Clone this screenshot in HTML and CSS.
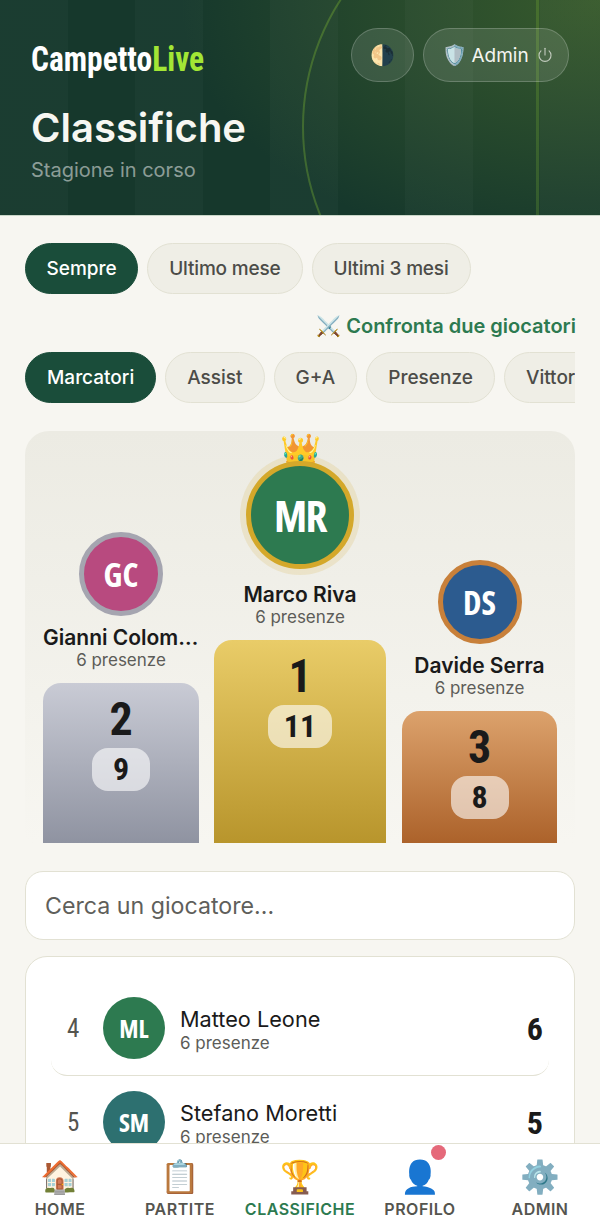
FILE: index.html
```html
<!DOCTYPE html>
<html lang="it">
<head>
    <meta charset="UTF-8">
    <meta name="viewport" content="width=device-width, initial-scale=1.0">
    <title>CampettoLive - Classifiche</title>
    <link rel="stylesheet" href="styles.css">
</head>
<body>
<div class="app">
    <!-- Header -->
    <header class="hero">
        <div class="pitch-circle"></div>
        <div class="pitch-line"></div>
        <div class="hero-top">
            <div class="logo">Campetto<span>Live</span></div>
            <div class="hero-actions">
                <button class="glass-btn theme-btn">🌗</button>
                <button class="glass-btn admin-btn">
                    <span class="admin-emoji">🛡️</span> Admin
                    <svg class="power" width="18" height="18" viewBox="0 0 24 24" fill="none" stroke="currentColor" stroke-width="1.5" stroke-linecap="round"><path d="M12 3v9"/><path d="M6.6 6.6a8 8 0 1 0 10.8 0"/></svg>
                </button>
            </div>
        </div>
        <h1>Classifiche</h1>
        <p class="hero-sub">Stagione in corso</p>
    </header>

    <main class="content">
        <div class="pills filters">
            <button class="pill active">Sempre</button>
            <button class="pill">Ultimo mese</button>
            <button class="pill">Ultimi 3 mesi</button>
        </div>
        <a class="compare" href="#">⚔️ Confronta due giocatori</a>
        <div class="pills tabs">
            <button class="pill active">Marcatori</button>
            <button class="pill">Assist</button>
            <button class="pill">G+A</button>
            <button class="pill">Presenze</button>
            <button class="pill">Vittorie</button>
        </div>

        <!-- Podio -->
        <section class="podium">
            <div class="podium-col second">
                <div class="avatar big silver">GC</div>
                <div class="podium-name">Gianni Colombo</div>
                <div class="podium-sub">6 presenze</div>
                <div class="bar">
                    <div class="bar-pos">2</div>
                    <div class="bar-val">9</div>
                </div>
            </div>
            <div class="podium-col first">
                <div class="crown">👑</div>
                <div class="avatar huge gold">MR</div>
                <div class="podium-name">Marco Riva</div>
                <div class="podium-sub">6 presenze</div>
                <div class="bar">
                    <div class="bar-pos">1</div>
                    <div class="bar-val">11</div>
                </div>
            </div>
            <div class="podium-col third">
                <div class="avatar big bronze">DS</div>
                <div class="podium-name">Davide Serra</div>
                <div class="podium-sub">6 presenze</div>
                <div class="bar">
                    <div class="bar-pos">3</div>
                    <div class="bar-val">8</div>
                </div>
            </div>
        </section>

        <input class="search" type="text" placeholder="Cerca un giocatore...">

        <section class="rank-list">
            <div class="rank-row">
                <div class="rank-pos">4</div>
                <div class="avatar small green">ML</div>
                <div class="rank-info">
                    <div class="rank-name">Matteo Leone</div>
                    <div class="rank-sub">6 presenze</div>
                </div>
                <div class="rank-val">6</div>
            </div>
            <div class="rank-row">
                <div class="rank-pos">5</div>
                <div class="avatar small teal">SM</div>
                <div class="rank-info">
                    <div class="rank-name">Stefano Moretti</div>
                    <div class="rank-sub">6 presenze</div>
                </div>
                <div class="rank-val">5</div>
            </div>
        </section>
    </main>

    <!-- Navigazione -->
    <nav class="bottom-nav">
        <a class="nav-item" href="#"><span class="nav-icon">🏠</span>HOME</a>
        <a class="nav-item" href="#"><span class="nav-icon">📋</span>PARTITE</a>
        <a class="nav-item active" href="#"><span class="nav-icon">🏆</span>CLASSIFICHE</a>
        <a class="nav-item" href="#"><span class="nav-icon">👤<i class="nav-badge"></i></span>PROFILO</a>
        <a class="nav-item" href="#"><span class="nav-icon">⚙️</span>ADMIN</a>
    </nav>
</div>
</body>
</html>
```
FILE: styles.css
```css
* {
    box-sizing: border-box;
}
body {
    margin: 0;
    font-family: Inter, "Noto Sans", sans-serif;
    background-color: #f7f6f1;
    color: #1a1a1a;
}
button {
    font-family: inherit;
}
.app {
    width: 600px;
    height: 1231px;
    display: flex;
    flex-direction: column;
    overflow: hidden;
}

/* header */
.hero {
    position: relative;
    flex: none;
    height: 216px;
    padding: 28px 31px 0;
    overflow: hidden;
    color: #fff;
    border-bottom: 1px solid #c9d6c8;
    background:
        repeating-linear-gradient(90deg, rgba(255,255,255,0.022) 0, rgba(255,255,255,0.022) 68px, rgba(255,255,255,0) 68px, rgba(255,255,255,0) 135px),
        radial-gradient(ellipse 420px 260px at 100% 0, rgba(90,125,45,0.5), rgba(90,125,45,0) 100%),
        #16382c;
}
.pitch-circle {
    position: absolute;
    left: 302px;
    top: -108px;
    width: 470px;
    height: 470px;
    border: 2.5px solid rgba(163,230,53,0.25);
    border-radius: 50%;
}
.pitch-line {
    position: absolute;
    left: 536px;
    top: 0;
    bottom: 0;
    width: 2.5px;
    background: rgba(163,230,53,0.18);
}
.hero-top {
    position: relative;
    display: flex;
    justify-content: space-between;
}
.logo {
    font-family: Roboto, sans-serif;
    font-stretch: 75%;
    font-weight: 700;
    font-size: 34px;
    line-height: 40px;
    margin-top: 11px;
    transform: scale(0.925, 1.04);
    transform-origin: left center;
}
.logo span {
    color: #a3e635;
}
.hero-actions {
    display: flex;
    gap: 9px;
}
.glass-btn {
    height: 54px;
    border-radius: 27px;
    border: 1.5px solid rgba(255,255,255,0.2);
    background: rgba(255,255,255,0.11);
    color: #f5f5f0;
    display: flex;
    align-items: center;
    justify-content: center;
    font-size: 19px;
}
.theme-btn {
    width: 63px;
    padding: 0;
    font-size: 20px;
}
.admin-btn {
    width: 146px;
    padding: 0 0 0 4px;
    gap: 6px;
}
.admin-emoji {
    margin-right: -2px;
    font-size: 20px;
}
.power {
    margin-left: 1px;
    opacity: 0.7;
}
.hero h1 {
    position: relative;
    margin: 22px 0 0;
    font-size: 40px;
    line-height: 48px;
    font-weight: 600;
    color: #f7f7f2;
}
.hero-sub {
    position: relative;
    margin: 6px 0 0;
    font-size: 20px;
    line-height: 24px;
    color: rgba(255,255,255,0.5);
}

/* contenuto */
.content {
    flex: 1;
    min-height: 0;
    overflow: hidden;
    padding: 27px 25px 0;
}
.pills {
    display: flex;
    gap: 9px;
}
.tabs {
    overflow: hidden;
}
.pill {
    flex: none;
    height: 51px;
    padding: 0 21px;
    border-radius: 26px;
    border: 1.5px solid #e2e1d3;
    background: #efeee6;
    color: #4c4c48;
    font-size: 19px;
    font-weight: 500;
}
.filters .pill {
    letter-spacing: -0.17px;
}
.pill.active {
    background: #1a4d3a;
    border-color: #1a4d3a;
    color: #fff;
}
.filters .pill.active {
    padding: 0 20.5px;
    letter-spacing: 0;
}
.compare {
    display: block;
    margin: 18px -1px 12px 0;
    text-align: right;
    font-size: 20px;
    line-height: 28px;
    font-weight: 600;
    color: #2d7a50;
    text-decoration: none;
}

/* podio */
.podium {
    margin-top: 28px;
    height: 412px;
    padding: 0 18px;
    border-radius: 24px 24px 0 0;
    background: linear-gradient(180deg, #ecebe3 0%, #f7f6f1 100%);
    display: flex;
    align-items: flex-end;
    gap: 15px;
}
.podium-col {
    position: relative;
    flex: 156px 0 0;
    display: flex;
    flex-direction: column;
    align-items: center;
    min-width: 0;
}
.podium-col.first {
    flex-basis: 172px;
}
.podium-col.third {
    flex-basis: 155px;
    margin-left: 1px;
}
.crown {
    position: absolute;
    top: -30px;
    font-size: 33px;
    line-height: 38px;
}
.avatar {
    position: relative;
    flex: none;
    border-radius: 50%;
    color: #fff;
    display: flex;
    align-items: center;
    justify-content: center;
    font-family: "Open Sans", sans-serif;
    font-stretch: 75%;
    font-weight: 700;
}
.avatar.big {
    width: 84px;
    height: 84px;
    border: 5px solid;
    font-size: 33px;
}
.avatar.huge {
    width: 108px;
    height: 108px;
    margin-bottom: 4px;
    border: 5px solid #d4a82a;
    font-size: 43px;
    letter-spacing: -1.5px;
    background: #2d7a50;
    box-shadow: 0 0 0 6px rgba(212,168,42,0.16);
}
.avatar.silver {
    background: #b84a7f;
    border-color: #a5a5b0;
}
.avatar.bronze {
    background: #2c5b8f;
    border-color: #c8803a;
}
.avatar.small {
    width: 62px;
    height: 62px;
    font-size: 25px;
}
.avatar.green {
    background: #2d7a50;
}
.avatar.teal {
    background: #2d7070;
}
.podium-name {
    width: 100%;
    margin-top: 9px;
    text-align: center;
    font-size: 21px;
    line-height: 26px;
    font-weight: 600;
    white-space: nowrap;
    overflow: hidden;
    text-overflow: ellipsis;
}
.podium-sub {
    font-size: 17px;
    line-height: 19px;
    color: #5c5c58;
    margin-bottom: 13px;
}
.bar {
    width: 100%;
    border-radius: 18px 18px 0 0;
    display: flex;
    flex-direction: column;
    align-items: center;
    font-family: Roboto, sans-serif;
    font-stretch: 75%;
    font-weight: 700;
}
.second .bar {
    height: 160px;
    background: linear-gradient(180deg, #c9cbd5 0%, #8f93a1 100%);
}
.first .bar {
    height: 203px;
    background: linear-gradient(180deg, #e9cc68 0%, #b8952c 100%);
}
.third .bar {
    height: 132px;
    background: linear-gradient(180deg, #dca26c 0%, #ac622a 100%);
}
.bar-pos {
    margin-top: 10px;
    font-size: 46px;
    line-height: 52px;
}
.bar-val {
    margin-top: 3px;
    min-width: 58px;
    padding: 0 16px;
    height: 43px;
    border-radius: 16px;
    background: rgba(255,255,255,0.6);
    text-align: center;
    font-size: 32px;
    line-height: 43px;
}

/* ricerca e lista */
.search {
    display: block;
    width: 100%;
    height: 69px;
    margin-top: 28px;
    padding: 0 19px;
    border: 1.5px solid #e2e1d3;
    border-radius: 18px;
    background: #fff;
    font-family: inherit;
    font-size: 23.2px;
}
.search::placeholder {
    color: #5f5f5b;
}
.rank-list {
    margin-top: 16px;
    height: 220px;
    padding: 26px 25px 0;
    border: 1.5px solid #e2e1d3;
    border-radius: 22px 22px 0 0;
    background: #fff;
}
.rank-row {
    height: 93px;
    margin-bottom: 1px;
    padding: 14px 6px 0 16px;
    display: flex;
    align-items: flex-start;
    border-radius: 0 0 16px 16px;
    border-bottom: 1.5px solid #e2e1d3;
}
.rank-row:last-child {
    border-bottom: 0;
}
.rank-pos {
    width: 36px;
    height: 62px;
    font-family: Roboto, sans-serif;
    font-stretch: 75%;
    font-size: 25px;
    line-height: 64px;
    color: #55554f;
}
.rank-info {
    flex: 1;
    margin-left: 15px;
    padding-top: 8px;
}
.rank-name {
    font-size: 21.7px;
    line-height: 28px;
}
.rank-sub {
    font-size: 17px;
    line-height: 20px;
    color: #5c5c58;
}
.rank-val {
    height: 62px;
    font-family: Roboto, sans-serif;
    font-stretch: 75%;
    font-weight: 700;
    font-size: 32px;
    line-height: 64px;
}

/* navigazione */
.bottom-nav {
    flex: none;
    height: 88px;
    display: flex;
    background: #fff;
    border-top: 1.5px solid #e2e1d3;
}
.nav-item {
    flex: 1;
    display: flex;
    flex-direction: column;
    align-items: center;
    padding-top: 14px;
    font-size: 16px;
    line-height: 20px;
    font-weight: 600;
    letter-spacing: 0.5px;
    color: #55554f;
    text-decoration: none;
}
.nav-item.active {
    color: #2d7a50;
}
.nav-icon {
    position: relative;
    font-size: 32px;
    line-height: 38px;
    letter-spacing: 0;
    margin-bottom: 3px;
}
.nav-badge {
    position: absolute;
    top: -13px;
    right: -6px;
    width: 15px;
    height: 15px;
    border-radius: 50%;
    background: #e5697a;
}
```
